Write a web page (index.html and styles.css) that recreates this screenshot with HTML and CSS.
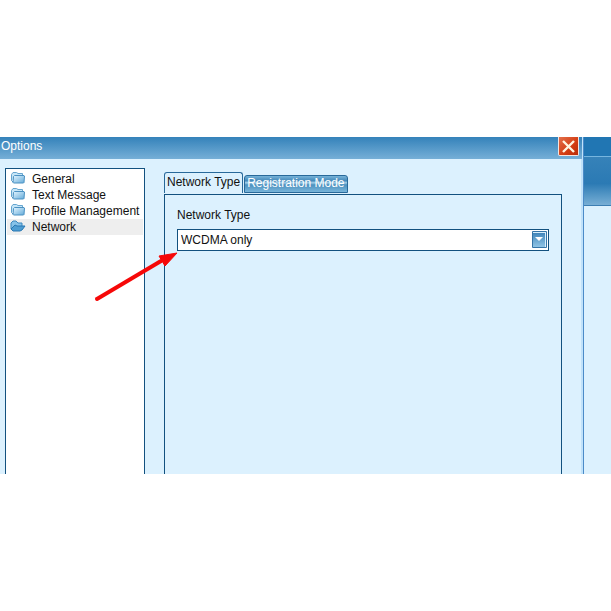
FILE: index.html
```html
<!DOCTYPE html>
<html lang="en">
  <head>
    <meta charset="utf-8">
    <title>Options</title>
    <link rel="stylesheet" href="styles.css">
  </head>
  <body>
    <svg class="defs" width="0" height="0" aria-hidden="true">
      <defs>
        <linearGradient id="blue" x1="0" y1="0" x2="1" y2="1">
          <stop offset="0" stop-color="#e4f5ff" />
          <stop offset="1" stop-color="#64abd9" />
        </linearGradient>
        <symbol id="folder" viewBox="0 0 16 14">
          <path d="M1.5 9.5V3.5L3 1.5h3.5l1.500 1h4.500v2" fill="#c5e5f7" stroke="#65a5cf" />
          <path d="M1.5 9.500l2 2" stroke="#4b91c2" />
          <path d="M4.5 4.500h9.500l.5.5-.5 6.500-.5.5H3.500l-.5-.5.5-6z" fill="url(#blue)" stroke="#4b91c2" />
        </symbol>
        <symbol id="folder-open" viewBox="0 0 16 14">
          <path d="M1 10V4l2-2h3l2 2h4v3" fill="#86c2e8" stroke="#3b88bf" />
          <path d="M1 10l4-4 2 1h8l-3 4-2 1H3z" fill="#4e9dd2" stroke="#2877b2" />
        </symbol>
      </defs>
    </svg>

    <div class="screen">
      <main class="dialog">
        <header class="titlebar">
          <h1>Options</h1>
          <button class="close" type="button" aria-label="Close">
            <svg width="13" height="13" viewBox="0 0 13 13">
              <path d="M1 1l11 11M12 1L1 12" stroke="#fff4df" stroke-width="2.4" />
            </svg>
          </button>
        </header>

        <div class="content">
          <nav class="tree">
            <a href="#general"><svg class="icon"><use href="#folder" /></svg>General</a>
            <a href="#text"><svg class="icon"><use href="#folder" /></svg>Text Message</a>
            <a href="#profile"><svg class="icon"><use href="#folder" /></svg>Profile Management</a>
            <a href="#network" class="selected"><svg class="icon"><use href="#folder-open" /></svg>Network</a>
          </nav>

          <section class="settings">
            <div class="tabs" role="tablist">
              <button class="tab active" type="button" role="tab" aria-selected="true">Network Type</button>
              <button class="tab" type="button" role="tab" aria-selected="false">Registration Mode</button>
            </div>
            <div class="panel" role="tabpanel">
              <label for="network-type">Network Type</label>
              <div class="combo">
                <select id="network-type">
                  <option>WCDMA only</option>
                </select>
                <svg class="combo-arrow" width="16" height="18" viewBox="0 0 16 18">
                  <defs>
                    <linearGradient id="drop" x1="0" y1="0" x2="0" y2="1">
                      <stop offset="0" stop-color="#4286ba" />
                      <stop offset="1" stop-color="#8fc4e5" />
                    </linearGradient>
                  </defs>
                  <path d="M.5 .5h14v16H.5z" fill="#d8effc" stroke="#3474a7" />
                  <path d="M1 2h12v14H1z" fill="url(#drop)" />
                  <path d="M3 6h8l-4 4z" fill="#fff" />
                </svg>
              </div>
            </div>
          </section>
        </div>
      </main>

      <aside class="behind">
        <div class="behind-title"></div>
        <div class="behind-toolbar"></div>
      </aside>

      <!-- pointer to the drop-down -->
      <svg class="pointer" width="90" height="56" viewBox="0 0 90 56" aria-hidden="true">
        <path d="M6 51L70 13" stroke="#f60808" stroke-width="4" stroke-linecap="round" />
        <path d="M86 5L68 8l3 5 3 5z" fill="#f60808" stroke="#f60808" />
      </svg>
    </div>
  </body>
</html>
```
FILE: styles.css
```css
* {
  box-sizing: border-box;
}

body {
  margin: 0;
  padding-top: 137px;
  background: #fff;
  color: #111;
  font: 12px/16px "Liberation Sans", Arial, sans-serif;
}

button,
select {
  font: inherit;
  color: inherit;
}

.defs {
  position: absolute;
}

.screen {
  position: relative;
  display: flex;
  background: #dcf1fe;
}

.dialog {
  flex: 1;
  border-right: 1px solid #4b8bc8;
  box-shadow: inset -2px 0 #c0e2fa;
}

.titlebar {
  display: flex;
  justify-content: space-between;
  height: 22px;
  padding-right: 3px;
  margin-right: 1px;
  background: linear-gradient(#3482ba, #76afd7);
}

.titlebar h1 {
  margin: 0;
  padding: 1px;
  color: #fff;
  font-size: 12px;
  font-weight: normal;
}

.close {
  display: flex;
  align-items: center;
  justify-content: center;
  width: 21px;
  height: 19px;
  padding: 0;
  border: 1px solid #f4e4df;
  border-top: 0;
  border-radius: 0 0 2px 2px;
  background: linear-gradient(135deg, #e3704b, #d33c12 60%, #b92d08);
}

.content {
  display: flex;
  gap: 19px;
  padding: 9px 21px 0 5px;
}

.tree {
  width: 140px;
  padding: 2px 1px;
  border: 1px solid #12517f;
  border-bottom: 0;
  background: #fff;
  overflow: hidden;
}

.tree a {
  display: flex;
  gap: 6px;
  padding-left: 3px;
  color: inherit;
  text-decoration: none;
  white-space: nowrap;
}

.tree .selected {
  background: #eee;
}

.icon {
  flex: none;
  width: 16px;
  height: 14px;
  fill: none;
}

.settings {
  flex: 1;
  display: flex;
  flex-direction: column;
  padding-top: 4px;
}

.tabs {
  display: flex;
  align-items: flex-start;
  gap: 1px;
  height: 22px;
}

.tab {
  height: 18px;
  margin-top: 3px;
  padding: 0 2px 2px;
  border: 1px solid #28699a;
  border-radius: 3px 3px 0 0;
  background: linear-gradient(#76b3d9, #4388b9 30%, #a4d0e9 42%, #4d91bf 55%, #78b5da);
  color: #fff;
  line-height: 14px;
}

.tab.active {
  height: 21px;
  margin-top: 0;
  border-bottom: 0;
  background: #dcf1fe;
  color: #111;
  line-height: 18px;
}

.panel {
  min-height: 280px;
  padding: 12px;
  border: 1px solid #12517f;
  border-bottom: 0;
}

.panel label {
  display: block;
  margin-bottom: 6px;
}

.combo {
  position: relative;
}

.combo select {
  display: block;
  width: 100%;
  height: 22px;
  padding: 0 20px 0 3px;
  border: 1px solid #12517f;
  border-radius: 0;
  background: #fff;
  appearance: none;
}

.combo-arrow {
  position: absolute;
  top: 2px;
  right: 1px;
  pointer-events: none;
}

.behind {
  width: 27px;
}

.behind-title {
  height: 19px;
  background: #2176b3;
}

.behind-toolbar {
  height: 50px;
  border-top: 1px solid #76b5df;
  border-bottom: 1px solid #3c7eb3;
  background: linear-gradient(#3682b9, #2b7ab4 55%, #78afd5);
}

.pointer {
  position: absolute;
  top: 111px;
  left: 91px;
  pointer-events: none;
}
```
